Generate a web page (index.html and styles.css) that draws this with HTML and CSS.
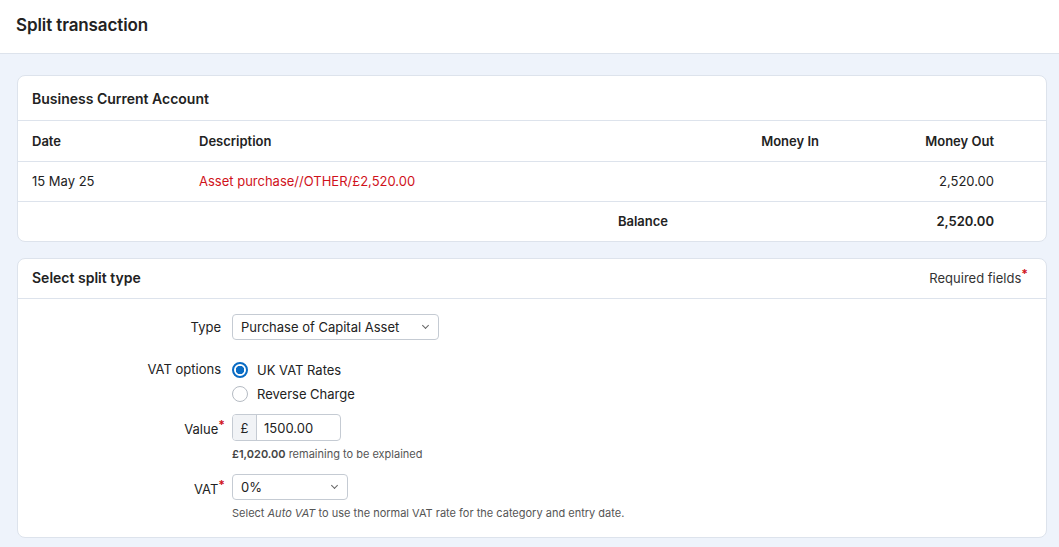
FILE: index.html
```html
<!DOCTYPE html>
<html lang="en">
<head>
    <meta charset="UTF-8">
    <title>Split transaction</title>
    <link rel="stylesheet" href="styles.css">
</head>
<body>
    <div class="topbar">
        <h1>Split transaction</h1>
    </div>
    <div class="page">
        <div class="card">
            <div class="card-head">
                <h2>Business Current Account</h2>
            </div>
            <table class="txn">
                <thead>
                    <tr>
                        <th class="c-date">Date</th>
                        <th class="c-desc">Description</th>
                        <th class="c-in">Money In</th>
                        <th class="c-out">Money Out</th>
                    </tr>
                </thead>
                <tbody>
                    <tr>
                        <td>15 May 25</td>
                        <td class="desc">Asset purchase//OTHER/£2,520.00</td>
                        <td class="num-in"></td>
                        <td class="num">2,520.00</td>
                    </tr>
                    <tr class="bal">
                        <td></td>
                        <td class="bal-label">Balance</td>
                        <td></td>
                        <td class="num">2,520.00</td>
                    </tr>
                </tbody>
            </table>
        </div>

        <div class="card">
            <div class="card-head card-head-sm">
                <h2>Select split type</h2>
                <span class="req">Required fields<i>*</i></span>
            </div>
            <div class="form">
                <div class="row row-type">
                    <label class="lbl">Type</label>
                    <div class="ctl">
                        <div class="select sel-type">Purchase of Capital Asset<span class="caret"></span></div>
                    </div>
                </div>
                <div class="row row-vat">
                    <label class="lbl">VAT options</label>
                    <div class="ctl radios">
                        <div class="radio"><span class="dot on"></span>UK VAT Rates</div>
                        <div class="radio"><span class="dot"></span>Reverse Charge</div>
                    </div>
                </div>
                <div class="row row-value">
                    <label class="lbl lbl-mid">Value<i>*</i></label>
                    <div class="ctl">
                        <div class="group">
                            <span class="addon">£</span>
                            <span class="val">1500.00</span>
                        </div>
                        <p class="help"><b>£1,020.00</b> remaining to be explained</p>
                    </div>
                </div>
                <div class="row">
                    <label class="lbl lbl-mid">VAT<i>*</i></label>
                    <div class="ctl">
                        <div class="select sel-vat">0%<span class="caret"></span></div>
                        <p class="help">Select <em>Auto VAT</em> to use the normal VAT rate for the category and entry date.</p>
                    </div>
                </div>
            </div>
        </div>
    </div>
</body>
</html>
```

FILE: styles.css
```css
*{
    margin: 0;
    padding: 0;
    box-sizing: border-box;
}
body{
    font-family: Inter, "Noto Sans", sans-serif;
    font-size: 13px;
    color: #222;
    background: #eef3fb;
}
.topbar{
    background: #fff;
    height: 54px;
    border-bottom: 1px solid #dde3ec;
    padding: 15px 16px 0;
}
.topbar h1{
    font-size: 17px;
    font-weight: 600;
    letter-spacing: -0.1px;
}
.page{
    padding: 21px 12px 10px 17px;
}
.card{
    background: #fff;
    border: 1px solid #dde3ec;
    border-radius: 8px;
    margin-bottom: 16px;
    overflow: hidden;
}
.card-head{
    height: 45px;
    border-bottom: 1px solid #dde3ec;
    display: flex;
    align-items: center;
    justify-content: space-between;
    padding: 0 18px 0 14px;
}
.card-head-sm{
    height: 40px;
}
.card-head h2{
    font-size: 14px;
    font-weight: 600;
}
.card-head-sm h2{
    margin-top: -2px;
}
.req{
    font-size: 13px;
    color: #333;
    margin-top: -2px;
}
.req i, .lbl i{
    position: relative;
    top: -5px;
    color: #d0121b;
    font-style: normal;
    font-weight: 700;
    font-size: 12px;
}
.txn{
    width: 100%;
    border-collapse: collapse;
}
.txn th, .txn td{
    height: 40px;
    text-align: left;
    padding: 0 14px;
}
.txn th{
    font-weight: 600;
}
.txn tbody td{
    border-top: 1px solid #dde3ec;
}
.c-date{ width: 167px; }
.c-desc{ width: 483px; }
.c-in{ width: 196px; }
.txn .c-in, .txn .num-in{
    text-align: right;
    padding-right: 45px;
}
.txn .c-out, .txn .num{
    text-align: right;
    padding-right: 52px;
}
.desc{ color: #d0121b; }
.bal td{ font-weight: 600; }
.txn .bal-label{ text-align: right; padding-right: 0; }

.form{
    padding: 15px 0 17px;
}
.row{
    display: flex;
    align-items: flex-start;
    margin-bottom: 13px;
}
.row:last-child{ margin-bottom: 0; }
.row-type{ margin-bottom: 18px; }
.row-vat{ margin-bottom: 8px; }
.lbl{
    width: 214px;
    text-align: right;
    padding-top: 5px;
    padding-right: 11px;
    flex-shrink: 0;
}
.lbl-mid{ padding-top: 7px; padding-right: 7px; }
.row-vat .lbl{ padding-top: 3px; }
.select{
    position: relative;
    height: 26px;
    border: 1px solid #c5cbd3;
    border-radius: 4px;
    padding: 4px 8px;
    color: #222;
}
.sel-type{ width: 207px; }
.sel-vat{ width: 116px; }
.caret{
    position: absolute;
    right: 10px;
    top: 8px;
    width: 5px;
    height: 5px;
    border-right: 1.3px solid #666;
    border-bottom: 1.3px solid #666;
    transform: rotate(45deg);
}
.radios .radio{
    display: flex;
    align-items: center;
    height: 24px;
}
.dot{
    width: 16px;
    height: 16px;
    border-radius: 50%;
    border: 1px solid #b5bbc3;
    margin-right: 9px;
}
.dot.on{
    border: 2px solid #0a6cc4;
    background: radial-gradient(circle, #0a6cc4 0 4px, #fff 4.5px);
}
.group{
    display: flex;
    width: 109px;
    height: 27px;
    border: 1px solid #c5cbd3;
    border-radius: 4px;
    overflow: hidden;
}
.addon{
    width: 24px;
    background: #f1f3f6;
    border-right: 1px solid #c5cbd3;
    text-align: center;
    padding-top: 5px;
}
.val{
    padding: 5px 7px;
}
.help{
    font-size: 11px;
    color: #555;
    margin-top: 6px;
}
.help b{
    color: #444;
    font-weight: 600;
}
```
